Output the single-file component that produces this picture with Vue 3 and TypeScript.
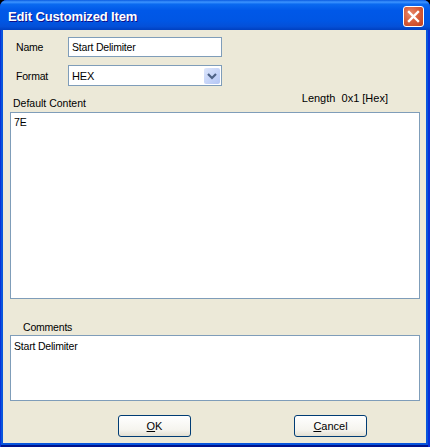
<script setup lang="ts">
const title = 'Edit Customized Item'
</script>

<template>
  <div class="window">
    <header class="titlebar">
      <span class="title">{{ title }}</span>
      <button class="close" aria-label="Close">
        <svg width="21" height="21" viewBox="0 0 21 21">
          <path d="M6 6 L15 15 M15 6 L6 15" stroke="#fff" stroke-width="2.4" stroke-linecap="square" fill="none" />
        </svg>
      </button>
    </header>
    <main class="client">
      <div class="row name-row">
        <label class="field-label">Name</label>
        <div class="input">Start Delimiter</div>
      </div>
      <div class="row format-row">
        <label class="field-label">Format</label>
        <div class="input select">
          <span class="select-value">HEX</span>
          <span class="arrow">
            <svg width="16" height="16" viewBox="0 0 16 16">
              <path d="M4 6 L8 10 L12 6" stroke="#4d6185" stroke-width="2.2" fill="none" />
            </svg>
          </span>
        </div>
      </div>
      <div class="content-head">
        <span class="content-label">Default Content</span>
        <span class="length">Length&nbsp; 0x1 [Hex]</span>
      </div>
      <div class="textbox content-box"><span class="lift">7E</span></div>
      <div class="comments-label">Comments</div>
      <div class="textbox comments-box">Start Delimiter</div>
      <div class="buttons">
        <button class="btn"><u>O</u>K</button>
        <button class="btn"><u>C</u>ancel</button>
      </div>
    </main>
  </div>
</template>

<style>
html, body { margin: 0; background: #000; }
</style>

<style scoped>
.window {
  width: 430px;
  height: 447px;
  box-sizing: border-box;
  display: flex;
  flex-direction: column;
  border-radius: 7px 7px 0 0;
  overflow: hidden;
  background: #0855dd;
  box-shadow: inset 1px 0 0 #0831d9, inset -2px 0 0 #0831d9, inset 0 -2px 0 #00138c;
  font-family: "Liberation Sans", sans-serif;
  font-size: 10.5px;
  letter-spacing: -0.2px;
  color: #000;
}
.titlebar {
  height: 30px;
  flex: none;
  display: flex;
  align-items: center;
  justify-content: space-between;
  padding: 0 6px 0 8px;
  background: linear-gradient(180deg, #0a5be0 0%, #3d95ff 7%, #0a6af0 14%, #0058e8 35%, #0056e4 70%, #0450d8 88%, #0040c0 100%);
}
.title {
  color: #fff;
  font-weight: 700;
  font-size: 13px;
  letter-spacing: -0.15px;
  margin-top: 2px;
  text-shadow: 1px 1px 0 #0f1089;
}
.close {
  width: 21px;
  height: 21px;
  padding: 0;
  border: 1px solid #fff;
  border-radius: 3px;
  box-sizing: border-box;
  background: radial-gradient(circle at 35% 35%, #e88a6c 0%, #d95f3c 45%, #c23f1e 100%);
  display: flex;
  align-items: center;
  justify-content: center;
  margin-top: 3px;
}
.close svg { flex: none; margin: -1px; }
.client {
  flex: 1;
  margin: 0 4px 4px 3px;
  padding: 7px 6px 0 7px;
  background: #ece9d8;
  display: flex;
  flex-direction: column;
  min-height: 0;
}
.row {
  display: flex;
  align-items: center;
}
.field-label {
  width: 58px;
  padding-left: 6px;
  box-sizing: border-box;
}
.input {
  width: 154px;
  height: 20px;
  box-sizing: border-box;
  border: 1px solid #7f9db9;
  background: #fff;
  padding-left: 3px;
  line-height: 18px;
}
.format-row { margin-top: 8px; }
.select {
  height: 21px;
  display: flex;
  align-items: center;
  justify-content: space-between;
  padding: 0 0 0 3px;
}
.select-value { font-size: 11px; }
.arrow {
  width: 16px;
  height: 16px;
  margin-right: 1px;
  border-radius: 2px;
  background: linear-gradient(135deg, #dde6fb 0%, #c3d2f8 60%, #b4c6f4 100%);
  display: block;
}
.arrow svg { display: block; }
.content-head {
  height: 26px;
  display: flex;
  justify-content: space-between;
}
.content-label {
  padding-left: 3px;
  margin-top: 9px;
  letter-spacing: 0;
  line-height: 16px;
}
.length {
  margin-top: 5px;
  margin-right: 32px;
  font-size: 11px;
  letter-spacing: 0;
  line-height: 14px;
}
.textbox {
  box-sizing: border-box;
  border: 1px solid #7f9db9;
  background: #fff;
  padding: 3px;
  line-height: 14px;
}
.lift {
  display: block;
  margin-top: -1px;
}
.content-box { height: 187px; flex: none; }
.comments-label {
  height: 36px;
  padding: 21px 0 0 13px;
  box-sizing: border-box;
  line-height: 14px;
}
.comments-box { height: 66px; flex: none; }
.buttons {
  display: flex;
  gap: 103px;
  padding: 14px 0 0 108px;
}
.btn {
  width: 73px;
  height: 22px;
  padding: 0 0 1px;
  font: inherit;
  font-size: 11px;
  letter-spacing: 0;
  color: #000;
  border: 1px solid #003c74;
  border-radius: 3px;
  background: linear-gradient(180deg, #fff 0%, #f5f4ee 70%, #e3e0d2 100%);
}
</style>
